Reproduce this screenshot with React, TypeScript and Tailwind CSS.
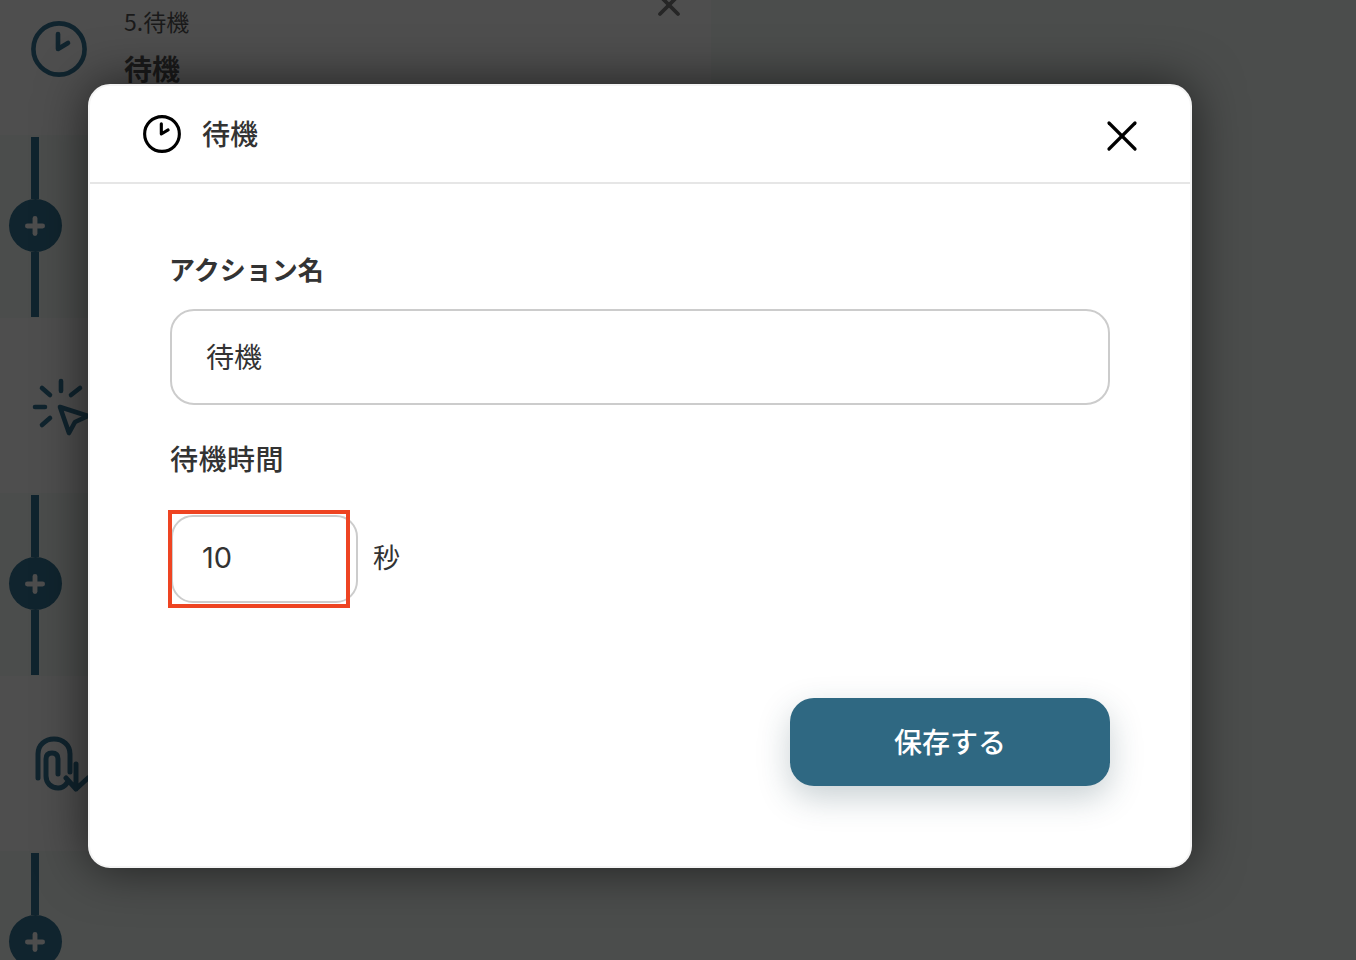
import { Plus, X } from "lucide-react"

const font = { fontFamily: '"Noto Sans CJK JP", "Noto Sans", sans-serif' }

const ClockIcon = ({ className }: { className: string }) => (
  <svg viewBox="0 0 56 56" fill="none" stroke="currentColor" strokeWidth="4.6" strokeLinecap="round" strokeLinejoin="round" className={className}>
    <circle cx="28" cy="28" r="25.6" />
    <path d="M27 13V28L37 22" />
  </svg>
)

const ClickIcon = () => (
  <svg viewBox="0 0 60 60" fill="none" stroke="#10242e" strokeWidth="4.6" strokeLinecap="round" strokeLinejoin="round" className="w-[60px] h-[60px]">
    <path d="M29 3V13M10 10L18 17M39 17L48 10M3 29H13M10 47L18 40" />
    <path d="M28 29L56 38L43 44L37 55Z" />
  </svg>
)

const ClipIcon = () => (
  <svg viewBox="0 0 56 56" fill="none" stroke="#10242e" strokeWidth="5" strokeLinecap="round" strokeLinejoin="round" className="w-[56px] h-[56px]">
    <path d="M4 42V18C4 9 11 3 20 3C29 3 36 9 36 18V36" />
    <path d="M24 38V23C24 19 22 17 18 17C14 17 12 19 12 23V40C12 47 17 52 24 52C28 52 31 50 33 47" />
    <path d="M42 28V53M32 42L42 53L54 42" />
  </svg>
)

const Connector = () => (
  <div className="h-[183px] shrink-0 pt-[2px] flex flex-col items-start">
    <div className="w-[70px] h-[180px] flex flex-col items-center">
      <div className="w-[8px] h-[62px] shrink-0 bg-[#10242e]" />
      <div className="w-[53px] h-[53px] shrink-0 rounded-full bg-[#10242e] flex items-center justify-center text-[#4d4d4d]">
        <Plus size={26} strokeWidth={4.5} />
      </div>
      <div className="w-[8px] h-[65px] shrink-0 bg-[#10242e]" />
    </div>
  </div>
)

const App = () => {
  return (
    <div className="relative w-[1356px] h-[960px] overflow-hidden bg-[#4b4d4c]" style={font}>
      <div className="w-[711px] h-[960px] flex flex-col overflow-hidden">
        <div className="h-[135px] shrink-0 bg-[#4e4e4e] flex pl-[31px] overflow-hidden">
          <ClockIcon className="w-[56px] h-[56px] mt-[21px] text-[#10242e]" />
          <div className="ml-[37px] flex-1 flex flex-col items-start">
            <p className="text-[23px] leading-[30px] mt-[6px] text-[#1a1a1a]">5.待機</p>
            <p className="text-[28px] leading-[40px] mt-[12px] font-bold text-[#1a1a1a]">待機</p>
          </div>
          <X size={36} strokeWidth={2.5} className="mt-[-13px] mr-[24px] text-[#262626]" />
        </div>
        <Connector />
        <div className="h-[175px] shrink-0 bg-[#4e4e4e] pl-[32px] pt-[60px]">
          <ClickIcon />
        </div>
        <Connector />
        <div className="h-[175px] shrink-0 bg-[#4e4e4e] pl-[34px] pt-[60px]">
          <ClipIcon />
        </div>
        <Connector />
      </div>

      <div className="absolute left-[88px] top-[84px] w-[1104px] h-[784px] rounded-[22px] bg-white border-2 border-[#f4f4f4] shadow-[0_0_50px_rgba(0,0,0,0.6)] flex flex-col">
        <div className="h-[98px] shrink-0 border-b-2 border-[#e6e6e6] flex items-center pl-[53px] pr-[42px]">
          <ClockIcon className="w-[38px] h-[38px] text-black" />
          <span className="ml-[21px] text-[28px] leading-[40px] font-medium text-[#333333] mb-[2px]">待機</span>
          <X size={52} strokeWidth={1.5} className="ml-auto mt-[4px] text-black" />
        </div>

        <div className="flex-1 flex flex-col pl-[80px] pr-[80px]">
          <label className="mt-[67px] -ml-[1px] text-[26px] leading-[36px] font-bold text-[#333333]">アクション名</label>
          <div className="mt-[22px] h-[96px] rounded-[24px] border-2 border-[#cccccc] flex items-center pl-[34px] pb-[2px] text-[28px] text-[#333333]">
            待機
          </div>
          <label className="mt-[35px] text-[28px] leading-[36px] font-medium tracking-[0.5px] text-[#333333]">待機時間</label>

          <div className="relative mt-[39px] flex items-center">
            <div className="w-[187px] h-[88px] ml-[1px] rounded-[22px] border-2 border-[#cccccc] flex items-center pl-[29px] pb-[2px] text-[29px] text-[#333333]" style={{ fontFamily: "Inter, sans-serif" }}>
              10
            </div>
            <span className="ml-[15px] pb-[4px] text-[27px] text-[#333333]">秒</span>
            <div className="absolute left-[-2px] top-[-5px] w-[182px] h-[98px] border-4 border-[#ee4422]" />
          </div>

          <div className="flex justify-end mt-[95px]">
            <button className="w-[320px] h-[88px] pb-[3px] rounded-[24px] bg-[#2f6882] text-white text-[28px] font-medium shadow-[0_12px_32px_rgba(40,70,85,0.25)]">
              保存する
            </button>
          </div>
        </div>
      </div>
    </div>
  )
}

export default App
